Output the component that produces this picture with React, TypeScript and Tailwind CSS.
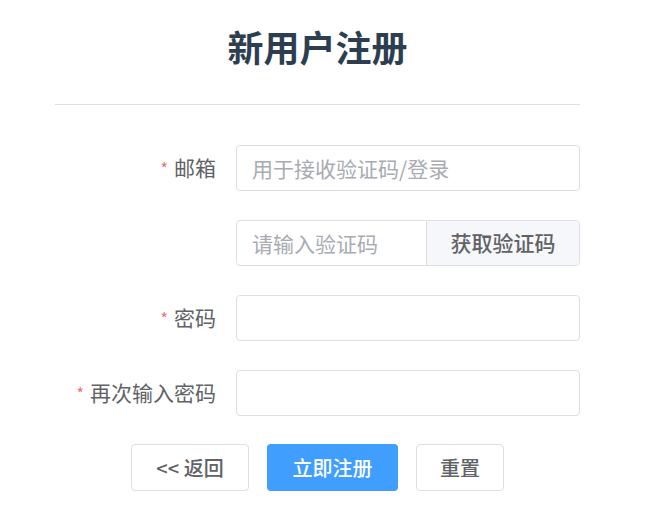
import { useState } from "react";

const font = { fontFamily: '"Noto Sans CJK SC", "Noto Sans", sans-serif' };

function FormRow({
  label,
  required,
  children,
}: {
  label?: string;
  required?: boolean;
  children: React.ReactNode;
}) {
  return (
    <div className="flex items-center h-[46px] mb-[29px]">
      <div className="w-[181px] pr-[20px] flex justify-end items-center text-[21px] text-[#606266] shrink-0">
        {required && <span className="text-[#f56c6c] text-[16px] mr-[6px]">*</span>}
        {label}
      </div>
      <div className="flex-1 min-w-0 h-full">{children}</div>
    </div>
  );
}

export default function App() {
  const [email, setEmail] = useState("");
  const [code, setCode] = useState("");
  const [pwd, setPwd] = useState("");
  const [pwd2, setPwd2] = useState("");

  const inputCls =
    "w-full h-full border border-[#dcdfe6] rounded-[4px] px-[15px] text-[21px] text-[#606266] placeholder:text-[#a8abb2] outline-none bg-white";

  return (
    <div className="w-[655px] h-[531px] bg-white" style={font}>
      <div className="ml-[55px] w-[525px]">
        <h1 className="pt-[20px] h-[104px] text-center text-[36px] font-bold text-[#2c3e50] leading-[52px]">
          新用户注册
        </h1>
        <div className="h-px bg-[#dcdfe6]" />

        <div className="pt-[40px]">
          <FormRow label="邮箱" required>
            <input
              className={inputCls}
              placeholder="用于接收验证码/登录"
              value={email}
              onChange={(e) => setEmail(e.target.value)}
            />
          </FormRow>

          <FormRow>
            <div className="flex w-full h-full border border-[#dcdfe6] rounded-[4px] overflow-hidden">
              <input
                className="flex-1 w-0 min-w-0 h-full px-[15px] text-[21px] text-[#606266] placeholder:text-[#a8abb2] outline-none"
                placeholder="请输入验证码"
                value={code}
                onChange={(e) => setCode(e.target.value)}
              />
              <button className="w-[153px] shrink-0 h-full bg-[#f5f7fa] border-l border-[#dcdfe6] text-[21px] font-medium text-[#606266]">
                获取验证码
              </button>
            </div>
          </FormRow>

          <FormRow label="密码" required>
            <input
              type="password"
              className={inputCls}
              value={pwd}
              onChange={(e) => setPwd(e.target.value)}
            />
          </FormRow>

          <FormRow label="再次输入密码" required>
            <input
              type="password"
              className={inputCls}
              value={pwd2}
              onChange={(e) => setPwd2(e.target.value)}
            />
          </FormRow>
        </div>

        <div className="flex justify-center gap-[18px] -mt-[1px]">
          <button className="w-[118px] h-[47px] border border-[#dcdfe6] rounded-[4px] bg-white text-[20px] font-medium text-[#606266]">
            &lt;&lt; 返回
          </button>
          <button className="w-[131px] h-[47px] rounded-[4px] bg-[#409eff] text-[20px] font-medium text-white">
            立即注册
          </button>
          <button className="w-[88px] h-[47px] border border-[#dcdfe6] rounded-[4px] bg-white text-[20px] font-medium text-[#606266]">
            重置
          </button>
        </div>
      </div>
    </div>
  );
}
